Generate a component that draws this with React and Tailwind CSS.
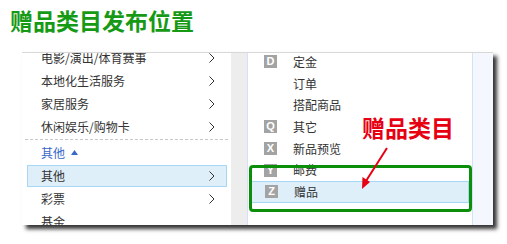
import React from "react";

const cjk = { fontFamily: '"Noto Sans CJK SC", "Noto Sans", sans-serif' };

const Chevron = () => (
  <svg width="6" height="10" viewBox="0 0 6 10" className="shrink-0">
    <polyline points="0.5,0.5 5,5 0.5,9.5" fill="none" stroke="#333" strokeWidth="1" />
  </svg>
);

const LeftRow = ({ label, arrow = true }) => (
  <div className="h-[23px] flex items-center justify-between pl-[19px] pr-[16px] text-[12px] text-[#333]">
    <span>{label}</span>
    {arrow && <Chevron />}
  </div>
);

const Badge = ({ letter }) =>
  letter ? (
    <span className="w-[13px] h-[13px] bg-[#a3a3a3] text-white text-[11px] font-bold leading-[13px] text-center shrink-0" style={{ fontFamily: '"Liberation Sans", sans-serif' }}>
      {letter}
    </span>
  ) : (
    <span className="w-[13px] h-[13px] shrink-0" />
  );

const RightRow = ({ letter, label, active }) => (
  <div
    className={
      active
        ? "h-[21.7px] mx-[3px] flex items-center gap-[16px] pl-[13px] text-[12px] text-[#333] bg-[#dfeffa] border border-[#a6d8f5]"
        : "h-[21.7px] flex items-center gap-[16px] pl-[16px] text-[12px] text-[#333]"
    }
  >
    <Badge letter={letter} />
    <span>{label}</span>
  </div>
);

export default function App() {
  return (
    <div className="w-[507px] h-[244px] bg-white overflow-hidden" style={cjk}>
      <div className="ml-[10px] mt-[9px] h-[23px] text-[23px] leading-[23px] font-bold text-[#169a16]">
        赠品类目发布位置
      </div>
      <div className="relative ml-[22px] mt-[20px] w-[471px] h-[173px] flex bg-white border-t border-[#d8d8d8] shadow-[4px_4px_4px_rgba(0,0,0,0.8)]">
        <div className="w-[209px] h-full overflow-hidden bg-white">
          <div className="mt-[-7px]">
            <LeftRow label="电影/演出/体育赛事" />
            <LeftRow label="本地化生活服务" />
            <LeftRow label="家居服务" />
            <LeftRow label="休闲娱乐/购物卡" />
          </div>
          <div className="mt-[1px] mx-[3px] border-t border-dashed border-[#c8c8c8]" />
          <div className="h-[25px] flex items-center gap-[6px] pl-[19px] text-[12px] text-[#3868c8]">
            <span>其他</span>
            <svg width="7" height="5" viewBox="0 0 7 5">
              <polygon points="3.5,0 7,5 0,5" fill="#3868c8" />
            </svg>
          </div>
          <div className="h-[22px] ml-[5px] mr-[4px] flex items-center justify-between pl-[13px] pr-[11px] text-[12px] text-[#333] bg-[#dfeffa] border border-[#a6d8f5]">
            <span>其他</span>
            <Chevron />
          </div>
          <LeftRow label="彩票" />
          <LeftRow label="基金" arrow={false} />
        </div>
        <div className="w-[16px] h-full bg-[#ededed]" />
        <div className="flex-1 h-full overflow-hidden bg-white border-l border-r border-[#d3e2f8]">
          <div className="mt-[-2px]">
            <RightRow letter="D" label="定金" />
            <RightRow label="订单" />
            <RightRow label="搭配商品" />
            <RightRow letter="Q" label="其它" />
            <RightRow letter="X" label="新品预览" />
            <RightRow letter="Y" label="邮费" />
            <RightRow letter="Z" label="赠品" active />
          </div>
        </div>
        <div className="w-[20px] h-full bg-[#f4f7fd]" />

        <div className="absolute left-[227px] top-[112px] w-[223px] h-[47px] border-[3px] border-[#0b8f0b] rounded-[4px]" />
        <div className="absolute left-[340px] top-[63px] text-[23px] leading-[23px] font-bold text-[#e60012]">
          赠品类目
        </div>
        <svg className="absolute left-0 top-0" width="471" height="173" viewBox="0 0 471 173">
          <line x1="365" y1="95" x2="344" y2="128" stroke="#e60012" strokeWidth="2" />
          <polygon points="340,136 340.5,124 348,129" fill="#e60012" />
        </svg>
      </div>
    </div>
  );
}
